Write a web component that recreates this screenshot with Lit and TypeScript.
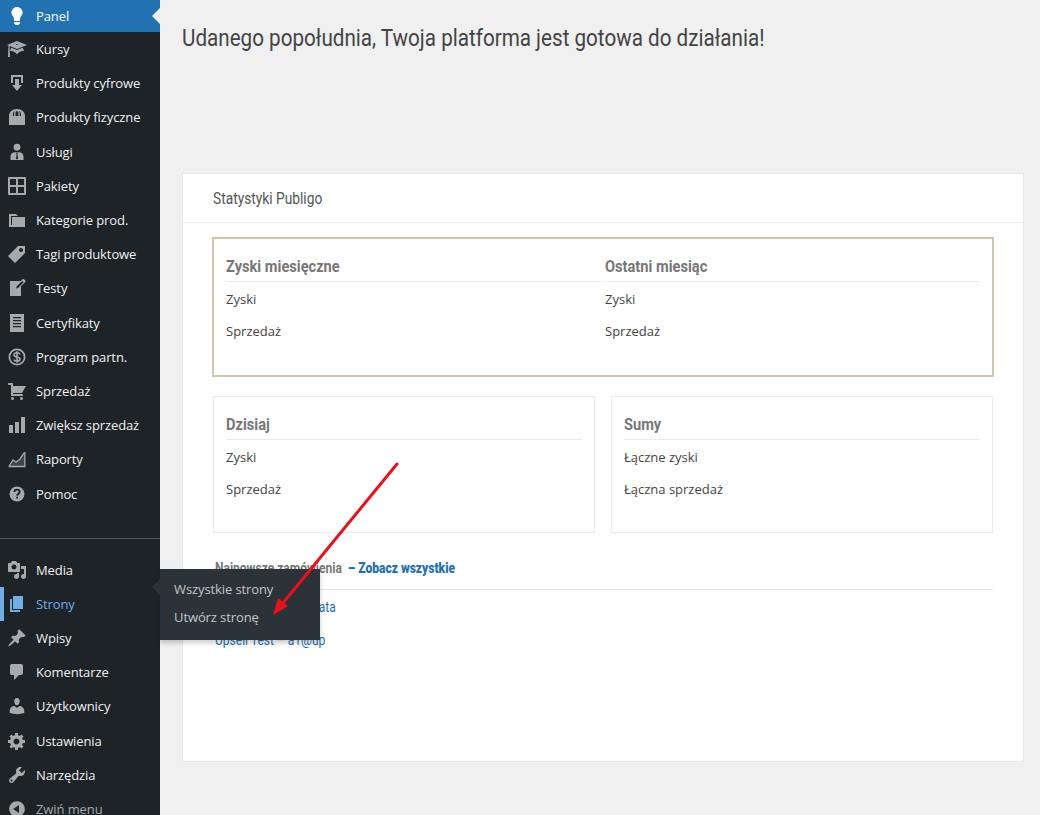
import { LitElement, html, css, svg } from 'lit';
import { customElement } from 'lit/decorators.js';

// dashicons-like glyphs, 20x20 box
const icons: Record<string, ReturnType<typeof svg>> = {
  bulb: svg`<path d="M10 1c3.11 0 5.63 2.52 5.63 5.62 0 1.84-2.03 4.58-2.03 4.58-.33.44-.6 1.25-.6 1.8v1c0 .55-.45 1-1 1H8c-.55 0-1-.45-1-1v-1c0-.55-.27-1.36-.6-1.8 0 0-2.02-2.74-2.02-4.58C4.38 3.52 6.89 1 10 1zM7 16.87V16h6v.87c0 .62-.13 1.13-.75 1.13H12c0 .62-.4 1-1.02 1h-2c-.61 0-.98-.38-.98-1h-.25c-.62 0-.75-.51-.75-1.13z"/>`,
  learn: svg`<path d="M10 10L2.54 7.02 3 18H1l.48-11.41L0 6l10-4 10 4zm0-5c-.55 0-1 .22-1 .5s.45.5 1 .5 1-.22 1-.5-.45-.5-1-.5zm0 6l5.57-2.23c.71.94 1.2 2.07 1.36 3.3-.3-.04-.61-.07-.93-.07-2.55 0-4.78 1.37-6 3.41C8.78 13.37 6.55 12 4 12c-.32 0-.63.03-.93.07.16-1.23.65-2.36 1.36-3.3z"/>`,
  download: svg`<path d="M14.01 4v6h2V2H4v8h2.01V4h8zm-2 2v6h3l-5 6-5-6h3V6h4z"/>`,
  bag: svg`<path fill-rule="evenodd" d="M2 18V9c0-4 3.4-7 8-7s8 3 8 7v9H2zM6 9h1.2V6.2C7.2 5 8 4 8.6 3.8 7 4.2 6 5.6 6 7.2V9zm6.8 0H14V7.2c0-1.6-1-3-2.6-3.4.6.2 1.4 1.2 1.4 2.4V9zM8.6 9h2.8V5.6c0-.8-.6-1.4-1.4-1.4s-1.4.6-1.4 1.4V9z"/>`,
  man: svg`<circle cx="10" cy="5.2" r="3.4"/><path fill-rule="evenodd" d="M3.5 18v-3.6c0-2.6 2-4.2 4.5-4.2h4c2.500 0 4.500 1.600 4.500 4.200V18h-13zM9.200 10.800l.4 1.600-.6 4.200 1 1 1-1-.6-4.200.4-1.600H9.200z"/>`,
  grid: svg`<path d="M2 1h16c.55 0 1 .45 1 1v16c0 .55-.45 1-1 1H2c-.55 0-1-.45-1-1V2c0-.55.45-1 1-1zm7.010 7.990v-6H3v6h6.010zm8 0v-6h-6v6h6zm-8 8.010v-6H3v6h6.010zm8 0v-6h-6v6h6z"/>`,
  category: svg`<path d="M5 7h13v10H2V4h7l2 2H4v9h1V7z"/>`,
  tag: svg`<path d="M11 2h7v7L8 19l-7-7zm3 6c1.100 0 2-.9 2-2s-.9-2-2-2-2 .9-2 2 .9 2 2 2z"/>`,
  write: svg`<path d="M16.890 1.200l1.410 1.410c.39.39.39 1.020 0 1.410L14 8.330V18H3V3h10.670l1.800-1.800c.4-.39 1.030-.4 1.420 0zm-5.660 8.480l5.370-5.360-1.420-1.420-5.360 5.370-.71 2.120z"/>`,
  text: svg`<path fill-rule="evenodd" d="M3 1h14v18H3V1zm3 3v1.200h8V4H6zm0 3v1.200h8V7H6zm0 3v1.200h8V10H6zm0 3v1.200h8V13H6z"/>`,
  money: svg`<path fill-rule="evenodd" d="M10 1.500a8.500 8.500 0 1 1 0 17 8.500 8.500 0 0 1 0-17zm0 1.700a6.800 6.800 0 1 0 0 13.600 6.800 6.800 0 0 0 0-13.600z"/><path d="M13 7.300c-.5-1-1.500-1.500-3-1.500-1.700 0-3 .8-3 2.100 0 2.900 6 1.300 6 4.200 0 1.300-1.300 2.100-3 2.100-1.500 0-2.600-.6-3.100-1.600M10 4.300v11.400" fill="none" stroke="currentColor" stroke-width="1.600"/>`,
  cart: svg`<path d="M6 13h9c.55 0 1 .45 1 1s-.45 1-1 1H5c-.55 0-1-.45-1-1V4H2c-.55 0-1-.45-1-1s.45-1 1-1h3c.55 0 1 .45 1 1v2h13l-4 7H6v1zm-.5 3c.83 0 1.500.67 1.500 1.500S6.330 19 5.500 19 4 18.330 4 17.500 4.670 16 5.500 16zm9 0c.83 0 1.500.67 1.500 1.500s-.67 1.500-1.500 1.500-1.500-.67-1.500-1.500.67-1.500 1.500-1.500z"/>`,
  bars: svg`<path d="M18 18V2h-4v16h4zm-6 0V7H8v11h4zm-6 0v-8H2v8h4z"/>`,
  chart: svg`<path d="M1.500 17.500h16.300V3M2.200 17l3.800-6 3 2.200 3.800-3 4.500-6.500" fill="none" stroke="currentColor" stroke-width="1.300"/><path d="M6 11l3 2.200 3.800-3 4.500-6.500v13.500H2.500z" opacity=".25"/>`,
  help: svg`<circle cx="10" cy="10" r="7.500"/><path d="M7.400 8c0-1.500 1.100-2.400 2.700-2.400 1.500 0 2.600.8 2.600 2.200 0 2-2.500 1.900-2.500 3.900" fill="none" stroke="#1d2327" stroke-width="1.900"/><rect x="9.200" y="12.700" width="1.800" height="1.800" fill="#1d2327"/>`,
  media: svg`<path d="M13 11V4c0-.55-.45-1-1-1h-1.670L9 1H5L3.670 3H2c-.55 0-1 .45-1 1v7c0 .55.45 1 1 1h10c.55 0 1-.45 1-1zM7 4.500c1.380 0 2.500 1.120 2.500 2.500S8.380 9.500 7 9.500 4.500 8.380 4.500 7 5.620 4.500 7 4.500zM14 6h5v10.500c0 1.380-1.120 2.500-2.500 2.500S14 17.880 14 16.500s1.120-2.500 2.500-2.500c.17 0 .34.02.5.05V9h-3V6zm-4 8.050V13h2v3.500c0 1.380-1.120 2.500-2.500 2.500S7 17.880 7 16.500 8.120 14 9.500 14c.17 0 .34.02.5.05z"/>`,
  page: svg`<path d="M6 15V2h10v13H6zm-1 1h8v2H3V5h2v11z"/>`,
  pin: svg`<path d="M10.440 3.020l1.820-1.820 6.360 6.350-1.830 1.820c-1.050-.68-2.480-.57-3.410.36l-.75.75c-.92.93-1.040 2.350-.35 3.410l-1.830 1.820-2.410-2.410-2.800 2.790c-.42.42-3.380 2.710-3.800 2.290s1.860-3.390 2.280-3.810l2.790-2.790L4.100 9.360l1.830-1.820c1.050.69 2.480.57 3.400-.36l.75-.75c.93-.92 1.050-2.350.36-3.410z"/>`,
  comment: svg`<path d="M5 2h9c1.100 0 2 .9 2 2v7c0 1.100-.9 2-2 2h-2l-5 5v-5H5c-1.100 0-2-.9-2-2V4c0-1.100.9-2 2-2z"/>`,
  users: svg`<path d="M10 9.250c-2.270 0-2.730-3.440-2.730-3.440C7 4.020 7.820 2 9.970 2c2.160 0 2.980 2.020 2.710 3.810 0 0-.41 3.440-2.680 3.440zm0 2.570L12.720 10c2.390 0 4.520 2.330 4.520 4.530v2.490s-3.650 1.130-7.240 1.130c-3.650 0-7.240-1.130-7.240-1.130v-2.490c0-2.250 1.940-4.480 4.470-4.480z"/>`,
  gear: svg`<path d="M18 12h-2.180c-.17.7-.44 1.350-.81 1.930l1.540 1.540-2.100 2.100-1.540-1.540c-.58.36-1.230.63-1.910.79V19H8v-2.180c-.68-.16-1.330-.43-1.910-.79l-1.540 1.540-2.120-2.120 1.540-1.540c-.36-.58-.63-1.230-.79-1.910H1V9.030h2.170c.16-.7.44-1.350.8-1.940L2.430 5.550l2.100-2.100 1.540 1.540c.58-.37 1.240-.64 1.930-.81V2h3v2.180c.68.16 1.330.43 1.910.79l1.540-1.540 2.120 2.120-1.540 1.540c.36.59.64 1.240.8 1.940H18V12zm-8.500 1.500c1.660 0 3-1.340 3-3s-1.340-3-3-3-3 1.340-3 3 1.340 3 3 3z"/>`,
  tools: svg`<path d="M16.680 9.770c-1.340 1.340-3.300 1.670-4.950.99l-5.410 6.520c-.99.99-2.590.99-3.580 0s-.99-2.590 0-3.570l6.520-5.420c-.68-1.650-.35-3.610.99-4.950 1.280-1.280 3.120-1.620 4.720-1.060l-2.890 2.890 2.820 2.820 2.860-2.870c.53 1.580.18 3.390-1.080 4.650zM3.810 16.210c.4.39 1.040.39 1.430 0 .4-.4.4-1.040 0-1.430-.39-.4-1.030-.4-1.430 0-.39.39-.39 1.030 0 1.430z"/>`,
  collapse: svg`<path d="M10 2.160c4.330 0 7.840 3.510 7.840 7.840s-3.510 7.840-7.840 7.840S2.160 14.330 2.160 10 5.710 2.160 10 2.160zm2 11.720V6.120L6.180 9.970z"/>`,
};

const topMenu = [
  ['learn', 'Kursy'], ['download', 'Produkty cyfrowe'], ['bag', 'Produkty fizyczne'],
  ['man', 'Usługi'], ['grid', 'Pakiety'], ['category', 'Kategorie prod.'],
  ['tag', 'Tagi produktowe'], ['write', 'Testy'], ['text', 'Certyfikaty'],
  ['money', 'Program partn.'], ['cart', 'Sprzedaż'], ['bars', 'Zwiększ sprzedaż'],
  ['chart', 'Raporty'], ['help', 'Pomoc'],
];
const bottomMenu = [
  ['pin', 'Wpisy'], ['comment', 'Komentarze'], ['users', 'Użytkownicy'],
  ['gear', 'Ustawienia'], ['tools', 'Narzędzia'],
];

const icon = (name: string) => html`<svg class="ico" viewBox="0 0 20 20" fill="currentColor">${icons[name]}</svg>`;

@customElement('app-root')
export class AppRoot extends LitElement {
  static override styles = css`
    :host {
      display: block;
      position: relative;
      width: 1040px;
      height: 815px;
      overflow: hidden;
      background: #f0f0f1;
      font-family: "Open Sans", sans-serif;
    }
    .layout { display: flex; height: 815px; }

    /* sidebar */
    .side { width: 160px; flex: none; background: #1d2327; color: #f0f0f1; }
    .item {
      display: flex;
      align-items: center;
      height: 34.2px;
      padding-left: 7px;
      gap: 9px;
      font-size: 13px;
      letter-spacing: -0.1px;
      box-sizing: border-box;
      position: relative;
      white-space: nowrap;
    }
    .ico { width: 20px; height: 20px; flex: none; color: #a7aaad; }
    .item.panel { height: 32px; background: #2271b1; color: #fff; }
    .item.panel .ico { color: #fff; }
    .item.panel::after {
      content: "";
      position: absolute;
      right: 0;
      top: 8px;
      border: 8px solid transparent;
      border-right-color: #f0f0f1;
      border-left-width: 0;
    }
    .item.current { color: #72aee6; box-shadow: inset 4px 0 0 #72aee6; }
    .item.current .ico { color: #72aee6; }
    .item.collapse { color: #a7aaad; }
    .sep { height: 1px; background: #50565b; margin: 27px 0 14px; }

    /* flyout */
    .fly {
      position: absolute;
      left: 160px;
      top: 569px;
      width: 160px;
      height: 71px;
      background: #2c3338;
      box-shadow: 0 3px 5px rgba(0, 0, 0, 0.2);
      color: #c3c4c7;
      font-size: 13px;
      letter-spacing: -0.1px;
      padding: 6px 14px;
      box-sizing: border-box;
    }
    .fly::before {
      content: "";
      position: absolute;
      left: -8px;
      top: 10px;
      border: 8px solid transparent;
      border-right-color: #2c3338;
      border-left-width: 0;
    }
    .fly div { height: 28px; line-height: 28px; white-space: nowrap; }

    /* main */
    .main { flex: 1; padding: 0 16px 0 22px; min-width: 0; }
    .title {
      height: 173px;
      box-sizing: border-box;
      padding-top: 22px;
      font-family: Roboto, sans-serif;
      font-size: 24px;
      line-height: 32px;
      color: #444;
      white-space: nowrap;
    }
    .cond { display: inline-block; transform: scaleX(0.86); transform-origin: left center; white-space: nowrap; }

    .card {
      height: 589px;
      box-sizing: border-box;
      background: #fff;
      border: 1px solid #e9e9e9;
    }
    .card-head {
      height: 49px;
      box-sizing: border-box;
      border-bottom: 1px solid #eee;
      padding: 0 30px;
      display: flex;
      align-items: center;
      font-family: Roboto, sans-serif;
      font-size: 16px;
      color: #555;
    }
    .card-body { padding: 14px 29px 0; }

    .gold {
      height: 140px;
      box-sizing: border-box;
      border: 2px solid #cfc6ab;
      padding: 0 12px;
      display: grid;
      grid-template-columns: 1fr 1fr;
      gap: 4px;
    }
    .two {
      display: grid;
      grid-template-columns: 382px 382px;
      gap: 16px;
      margin: 19px 0 0 1px;
    }
    .box {
      height: 137px;
      box-sizing: border-box;
      border: 1px solid #eaeaea;
      padding: 0 12px;
    }
    .stat-head {
      height: 43px;
      box-sizing: border-box;
      padding-top: 17px;
      border-bottom: 1px solid #eaeaea;
      font-family: Roboto, sans-serif;
      font-weight: 700;
      font-size: 17px;
      line-height: 20px;
      color: #777;
    }
    .box .stat-head { height: 43px; }
    .row {
      height: 32px;
      line-height: 34px;
      font-size: 13px;
      color: #444;
    }

    .recent { margin: 22px 1px 0 3px; }
    .recent-head {
      height: 35px;
      box-sizing: border-box;
      border-bottom: 1px solid #e5e5e5;
      padding-top: 4px;
      font-family: Roboto, sans-serif;
      font-weight: 700;
      font-size: 14px;
      line-height: 18px;
      color: #777;
      white-space: nowrap;
    }
    .recent-head b { color: #2271b1; }
    .link {
      height: 33px;
      line-height: 35px;
      font-family: Roboto, sans-serif;
      font-size: 14px;
      color: #2271b1;
      white-space: nowrap;
    }

    .arrow { position: absolute; left: 0; top: 0; pointer-events: none; }
  `;

  private menuItem([name, label]: string[], cls = '') {
    return html`<div class="item ${cls}">${icon(name)}<span>${label}</span></div>`;
  }

  private stat(title: string, a: string, b: string) {
    return html`
      <div class="stat">
        <div class="stat-head"><span class="cond">${title}</span></div>
        <div class="row">${a}</div>
        <div class="row">${b}</div>
      </div>`;
  }

  override render() {
    return html`
      <div class="layout">
        <nav class="side">
          ${this.menuItem(['bulb', 'Panel'], 'panel')}
          ${topMenu.map((m) => this.menuItem(m))}
          <div class="sep"></div>
          ${this.menuItem(['media', 'Media'])}
          ${this.menuItem(['page', 'Strony'], 'current')}
          ${bottomMenu.map((m) => this.menuItem(m))}
          ${this.menuItem(['collapse', 'Zwiń menu'], 'collapse')}
        </nav>
        <main class="main">
          <div class="title"><span class="cond">Udanego popołudnia, Twoja platforma jest gotowa do działania!</span></div>
          <section class="card">
            <div class="card-head"><span class="cond">Statystyki Publigo</span></div>
            <div class="card-body">
              <div class="gold">
                ${this.stat('Zyski miesięczne', 'Zyski', 'Sprzedaż')}
                ${this.stat('Ostatni miesiąc', 'Zyski', 'Sprzedaż')}
              </div>
              <div class="two">
                <div class="box">${this.stat('Dzisiaj', 'Zyski', 'Sprzedaż')}</div>
                <div class="box">${this.stat('Sumy', 'Łączne zyski', 'Łączna sprzedaż')}</div>
              </div>
              <div class="recent">
                <div class="recent-head"><span class="cond">Najnowsze zamówienia &nbsp;<b>– Zobacz wszystkie</b></span></div>
                <div class="link"><span class="cond">Upsell Test – a1@data</span></div>
                <div class="link"><span class="cond">Upsell Test – a1@up</span></div>
              </div>
            </div>
          </section>
        </main>
      </div>

      <div class="fly">
        <div>Wszystkie strony</div>
        <div>Utwórz stronę</div>
      </div>

      <svg class="arrow" width="1040" height="815" viewBox="0 0 1040 815">
        <path d="M397 464L283 603" stroke="#e8101a" stroke-width="3" stroke-linecap="round" fill="none"/>
        <path d="M273 615L278 598L288 606z" fill="#e8101a"/>
      </svg>
    `;
  }
}

declare global {
  interface HTMLElementTagNameMap { 'app-root': AppRoot; }
}
